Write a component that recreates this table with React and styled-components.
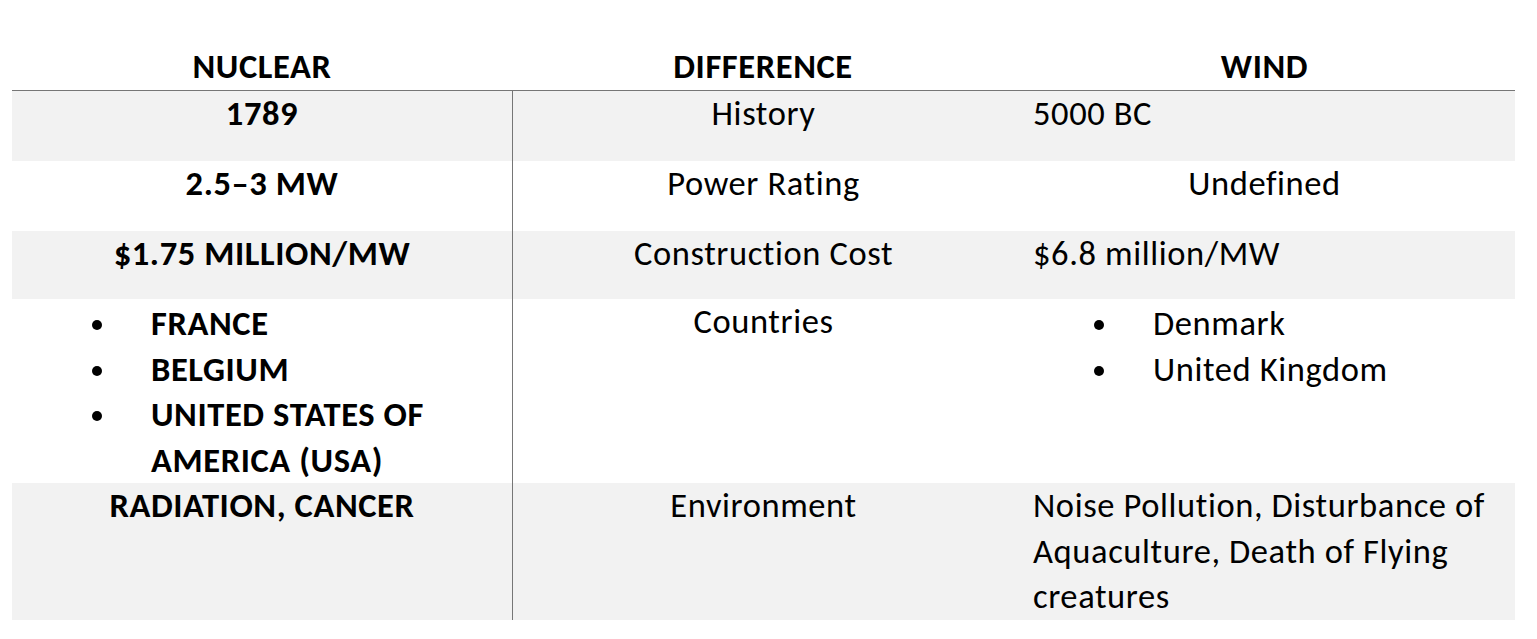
import React from "react";
import styled, { createGlobalStyle } from "styled-components";

const GlobalStyle = createGlobalStyle`
  html, body {
    margin: 0;
    padding: 0;
    background: #ffffff;
  }
  body {
    font-family: Carlito, Lato, "Open Sans", sans-serif;
    color: #000000;
  }
`;

const Page = styled.div`
  padding: 44px 22px 0 12px;
`;

const Table = styled.div`
  display: grid;
  grid-template-columns: 500px 502px 501px;
  font-size: 34.5px;
  letter-spacing: 0.6px;
  line-height: 45.5px;
`;

const HeadCell = styled.div`
  font-weight: 700;
  text-align: center;
  border-bottom: 1px solid #767676;
`;

const Cell = styled.div`
  background: ${(p) => (p.$shade ? "#f2f2f2" : "#ffffff")};
  font-weight: ${(p) => (p.$bold ? 700 : 400)};
  text-align: ${(p) => p.$align || "center"};
  padding: 0 19px ${(p) => p.$gap || 0}px;
  border-left: ${(p) => (p.$divider ? "1px solid #767676" : "none")};
`;

const List = styled.ul`
  list-style: none;
  margin: 0;
  padding: 2px 0 0 0;
  text-align: left;
`;

const Item = styled.li`
  display: flex;
  align-items: flex-start;
  padding-left: 61px;
`;

const Dot = styled.span`
  flex: none;
  width: 10px;
  height: 10px;
  margin-top: 19px;
  margin-right: 49px;
  border-radius: 50%;
  background: #000000;
`;

const rows = [
  { nuclear: "1789", diff: "History", wind: "5000 BC", windAlign: "left", shade: true, gap: 25 },
  { nuclear: "2.5–3 MW", diff: "Power Rating", wind: "Undefined", windAlign: "center", gap: 24 },
  { nuclear: "$1.75 MILLION/MW", diff: "Construction Cost", wind: "$6.8 million/MW", windAlign: "left", shade: true, gap: 23 },
  {
    nuclear: ["FRANCE", "BELGIUM", "UNITED STATES OF AMERICA (USA)"],
    diff: "Countries",
    wind: ["Denmark", "United Kingdom"],
    gap: 0,
  },
  {
    nuclear: "RADIATION, CANCER",
    diff: "Environment",
    wind: "Noise Pollution, Disturbance of Aquaculture, Death of Flying creatures",
    windAlign: "left",
    shade: true,
    gap: 0,
  },
];

function Content({ value }) {
  if (!Array.isArray(value)) return value;
  return (
    <List>
      {value.map((v) => (
        <Item key={v}>
          <Dot />
          <span>{v}</span>
        </Item>
      ))}
    </List>
  );
}

export default function App() {
  return (
    <Page>
      <GlobalStyle />
      <Table>
        <HeadCell>NUCLEAR</HeadCell>
        <HeadCell>DIFFERENCE</HeadCell>
        <HeadCell>WIND</HeadCell>
        {rows.map((r, i) => (
          <React.Fragment key={i}>
            <Cell $shade={r.shade} $bold $gap={r.gap}>
              <Content value={r.nuclear} />
            </Cell>
            <Cell $shade={r.shade} $divider $gap={r.gap}>
              {r.diff}
            </Cell>
            <Cell $shade={r.shade} $align={r.windAlign} $gap={r.gap}>
              <Content value={r.wind} />
            </Cell>
          </React.Fragment>
        ))}
      </Table>
    </Page>
  );
}
